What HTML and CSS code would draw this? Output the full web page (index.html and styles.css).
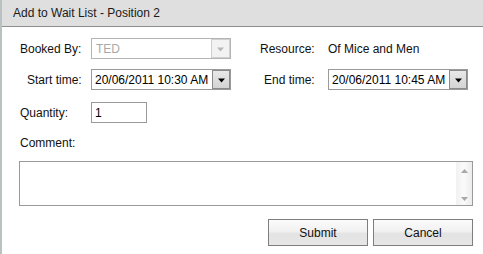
FILE: index.html
```html
<!DOCTYPE html>
<html>
<head>
<meta charset="utf-8">
<link rel="stylesheet" href="styles.css">
</head>
<body>
<div class="window">
  <div class="titlebar">Add to Wait List - Position 2</div>
  <div class="content">
    <div class="row row1">
      <div class="label l-booked">Booked By:</div>
      <div class="field field-wide disabled">
        <span class="field-text">TED</span>
        <span class="drop drop-disabled"><svg width="9" height="5" viewBox="0 0 9 5"><path d="M1 0.5h7L4.5 4.5z" fill="#b8b8b8"/></svg></span>
      </div>
      <div class="label l-resource">Resource:</div>
      <div class="value">Of Mice and Men</div>
    </div>
    <div class="row row2">
      <div class="label l-start">Start time:</div>
      <div class="field field-wide">
        <span class="field-text">20/06/2011 10:30 AM</span>
        <span class="drop"><svg width="9" height="5" viewBox="0 0 9 5"><path d="M1 0.5h7L4.5 4.5z" fill="#000"/></svg></span>
      </div>
      <div class="label l-end">End time:</div>
      <div class="field field-wide">
        <span class="field-text">20/06/2011 10:45 AM</span>
        <span class="drop"><svg width="9" height="5" viewBox="0 0 9 5"><path d="M1 0.5h7L4.5 4.5z" fill="#000"/></svg></span>
      </div>
    </div>
    <div class="row row3">
      <div class="label l-qty">Quantity:</div>
      <div class="field field-qty"><span class="field-text">1</span></div>
    </div>
    <div class="comment-label">Comment:</div>
    <div class="textarea">
      <div class="scrollbar">
        <svg width="7" height="4" viewBox="0 0 7 4"><path d="M0 4h7L3.5 0z" fill="#a8a8a8"/></svg>
        <svg width="7" height="4" viewBox="0 0 7 4"><path d="M0 0h7L3.5 4z" fill="#a8a8a8"/></svg>
      </div>
    </div>
    <div class="buttons">
      <div class="btn">Submit</div>
      <div class="btn">Cancel</div>
    </div>
  </div>
</div>
</body>
</html>
```
FILE: styles.css
```css
html, body {
  margin: 0;
  padding: 0;
  background: #fff;
}
body {
  font-family: "Liberation Sans", Arial, sans-serif;
  font-size: 12px;
  color: #111;
  width: 483px;
  height: 254px;
  overflow: hidden;
}
.window {
  height: 254px;
  border-left: 2px solid #b9c1c1;
  box-sizing: border-box;
}
.titlebar {
  height: 26px;
  line-height: 26px;
  background: #dfdfdf;
  border-bottom: 1px solid #8e8e8e;
  padding-left: 11px;
  color: #1a1a1a;
}
.content {
  padding: 11px 10px 0 0;
}
.row {
  display: flex;
  align-items: center;
  height: 21px;
}
.row2 { margin-top: 10px; }
.row3 { margin-top: 12px; }
.label {
  box-sizing: border-box;
  white-space: nowrap;
}
.l-booked { width: 89px; padding-left: 18px; }
.l-start { width: 89px; padding-left: 25px; }
.l-qty { width: 89px; padding-left: 18px; }
.l-resource { margin-left: 29px; width: 68px; }
.l-end { margin-left: 33px; width: 64px; }
.value { white-space: nowrap; }
.field {
  box-sizing: border-box;
  height: 21px;
  border: 1px solid #9a9a9a;
  background: #fff;
  display: flex;
  align-items: center;
  position: relative;
}
.field-wide { width: 140px; }
.field-qty { width: 56px; }
.field-text {
  padding-left: 3px;
  flex: 1;
  white-space: nowrap;
  color: #000;
}
.disabled { border-color: #b4b4b4; }
.disabled .field-text { color: #a8a8a8; padding-left: 4px; }
.drop {
  box-sizing: border-box;
  width: 18px;
  height: 19px;
  border: 1px solid #8a8a8a;
  background: linear-gradient(#e8e8e8, #d4d4d4);
  display: flex;
  align-items: center;
  justify-content: center;
}
.drop svg { margin-top: 1px; }
.drop-disabled {
  border-color: #d0d0d0;
  background: #f2f2f2;
  width: 19px;
}
.comment-label {
  margin-top: 13px;
  padding-left: 18px;
  line-height: 14px;
}
.textarea {
  box-sizing: border-box;
  margin: 11px 0 0 17px;
  height: 45px;
  border: 1px solid #9a9a9a;
  display: flex;
  justify-content: flex-end;
}
.scrollbar {
  width: 16px;
  background: linear-gradient(90deg, #f1f1f1, #fafafa, #ececec);
  display: flex;
  flex-direction: column;
  justify-content: space-between;
  align-items: center;
  padding: 7px 0 4px;
  box-sizing: border-box;
}
.buttons {
  display: flex;
  justify-content: flex-end;
  gap: 5px;
  margin-top: 13px;
}
.btn {
  box-sizing: border-box;
  width: 100px;
  height: 27px;
  border: 1px solid #7e7e7e;
  background: linear-gradient(#fbfbfb 0%, #f1f1f1 45%, #e3e3e3 55%, #e6e6e6 100%);
  display: flex;
  align-items: center;
  justify-content: center;
  color: #111;
}
```
